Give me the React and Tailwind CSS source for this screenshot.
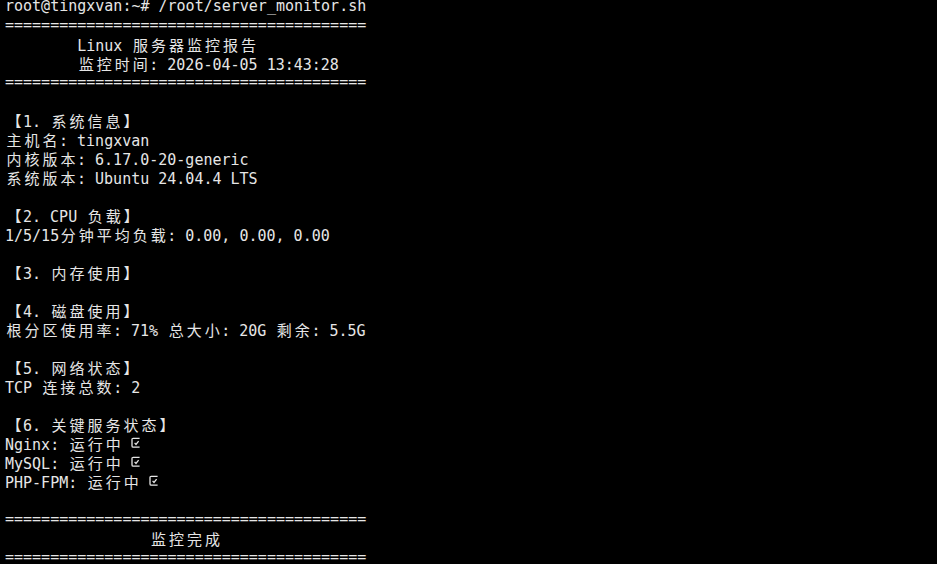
const lines = [
  "root@tingxvan:~# /root/server_monitor.sh",
  "========================================",
  "        Linux 服务器监控报告",
  "        监控时间: 2026-04-05 13:43:28",
  "========================================",
  "",
  "【1. 系统信息】",
  "主机名: tingxvan",
  "内核版本: 6.17.0-20-generic",
  "系统版本: Ubuntu 24.04.4 LTS",
  "",
  "【2. CPU 负载】",
  "1/5/15分钟平均负载: 0.00, 0.00, 0.00",
  "",
  "【3. 内存使用】",
  "",
  "【4. 磁盘使用】",
  "根分区使用率: 71% 总大小: 20G 剩余: 5.5G",
  "",
  "【5. 网络状态】",
  "TCP 连接总数: 2",
  "",
  "【6. 关键服务状态】",
  "Nginx: 运行中 ☑",
  "MySQL: 运行中 ☑",
  "PHP-FPM: 运行中 ☑",
  "",
  "========================================",
  "                监控完成",
  "========================================",
];

// narrow "☑" the terminal draws in a single cell
function CheckBox() {
  return (
    <span className="inline-block w-[9px] h-[19px] align-top">
      <svg width="9" height="19" viewBox="0 0 9 19" fill="none" stroke="#e6e6e6" strokeWidth="1.3">
        <path d="M8.6 4.3 H2.2 Q1 4.3 1 5.5 V12 Q1 13.2 2.2 13.2 H8.6" />
        <path d="M3.6 8.9 L5 10.4 L7.6 7.2" />
      </svg>
    </span>
  );
}

function Line({ text }) {
  const parts = [];
  let run = "";
  Array.from(text).forEach((ch, i) => {
    const code = ch.codePointAt(0);
    if (ch === "☑" || code >= 0x2e80) {
      if (run) {
        parts.push(run);
        run = "";
      }
      if (ch === "☑") {
        parts.push(<CheckBox key={i} />);
      } else {
        // wide chars take two cells
        parts.push(
          <span key={i} className="inline-block w-[18px] text-center font-['Noto_Sans_CJK_SC',sans-serif]">
            {ch}
          </span>
        );
      }
    } else {
      run += ch;
    }
  });
  if (run) parts.push(run);

  return <div className="h-[19px] leading-[19px] whitespace-pre">{parts.length ? parts : " "}</div>;
}

export default function App() {
  return (
    <div className="w-[937px] h-[564px] overflow-hidden bg-black">
      <div className="-mt-[3px] pl-[5px] text-[15px] text-[#e6e6e6] font-['DejaVu_Sans_Mono',monospace]">
        {lines.map((l, i) => (
          <Line key={i} text={l} />
        ))}
      </div>
    </div>
  );
}
